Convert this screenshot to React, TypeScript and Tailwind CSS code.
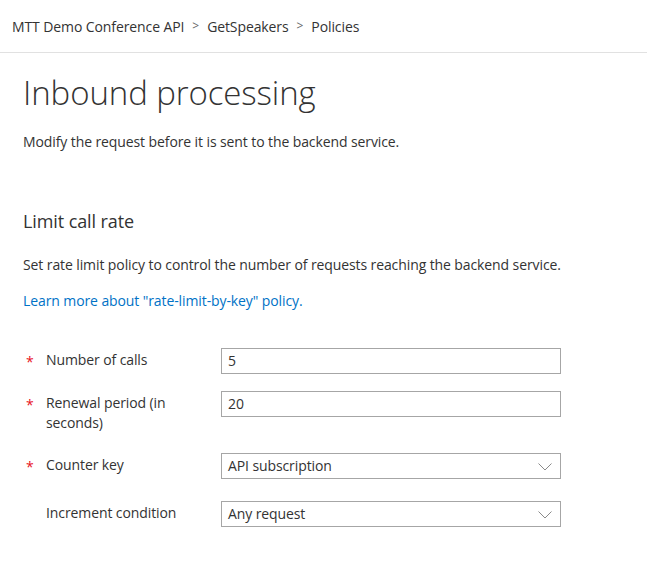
import React from "react";

const font = { fontFamily: '"Open Sans", "Noto Sans", sans-serif' };

const Chevron = () => (
  <svg width="14" height="8" viewBox="0 0 14 8" className="absolute right-[8px] top-[9px]">
    <path d="M0.5 0.5 L7 7 L13.5 0.5" fill="none" stroke="#8a8a8a" strokeWidth="1" />
  </svg>
);

interface FieldProps {
  label: React.ReactNode;
  value: string;
  required?: boolean;
  select?: boolean;
}

const Field = ({ label, value, required, select }: FieldProps) => (
  <div className="flex items-start">
    <div className="w-[23px] pl-[3px] pt-[4px] text-[#e81123] text-[14px] leading-[20px]">
      {required ? "*" : ""}
    </div>
    <div className="w-[175px] text-[14px] leading-[20px] text-[#333] pr-3 pt-[2px]">
      {label}
    </div>
    <div className="relative w-[340px] h-[26px] border border-[#a6a6a6] bg-white px-[6px] text-[14px] leading-[24px] text-[#333]">
      {value}
      {select && <Chevron />}
    </div>
  </div>
);

export default function App() {
  return (
    <div className="w-[647px] h-[564px] bg-white overflow-hidden tracking-[-0.1px]" style={font}>
      <div className="h-[53px] border-b border-[#e1e1e1] flex items-center pl-[12px] text-[14px] text-[#333]">
        <span>MTT Demo Conference API</span>
        <span className="mx-[8px] text-[#666] text-[12px]">&gt;</span>
        <span>GetSpeakers</span>
        <span className="mx-[8px] text-[#666] text-[12px]">&gt;</span>
        <span>Policies</span>
      </div>
      <div className="pl-[23px]">
        <h1 className="mt-[20px] text-[33px] leading-[40px] font-light text-[#333]">Inbound processing</h1>
        <p className="mt-[19px] text-[14px] leading-[20px] text-[#333]">
          Modify the request before it is sent to the backend service.
        </p>
        <h2 className="mt-[57px] text-[18px] leading-[24px] text-[#333]">Limit call rate</h2>
        <p className="mt-[22px] text-[14px] leading-[20px] text-[#333]">
          Set rate limit policy to control the number of requests reaching the backend service.
        </p>
        <a className="block mt-[16px] text-[14px] leading-[20px] text-[#0072c6]" href="#">
          Learn more about "rate-limit-by-key" policy.
        </a>
        <div className="mt-[37px] flex flex-col">
          <Field required label="Number of calls" value="5" />
          <div className="mt-[17px]">
            <Field required label="Renewal period (in seconds)" value="20" />
          </div>
          <div className="mt-[20px]">
            <Field required label="Counter key" value="API subscription" select />
          </div>
          <div className="mt-[22px]">
            <Field label="Increment condition" value="Any request" select />
          </div>
        </div>
      </div>
    </div>
  );
}
